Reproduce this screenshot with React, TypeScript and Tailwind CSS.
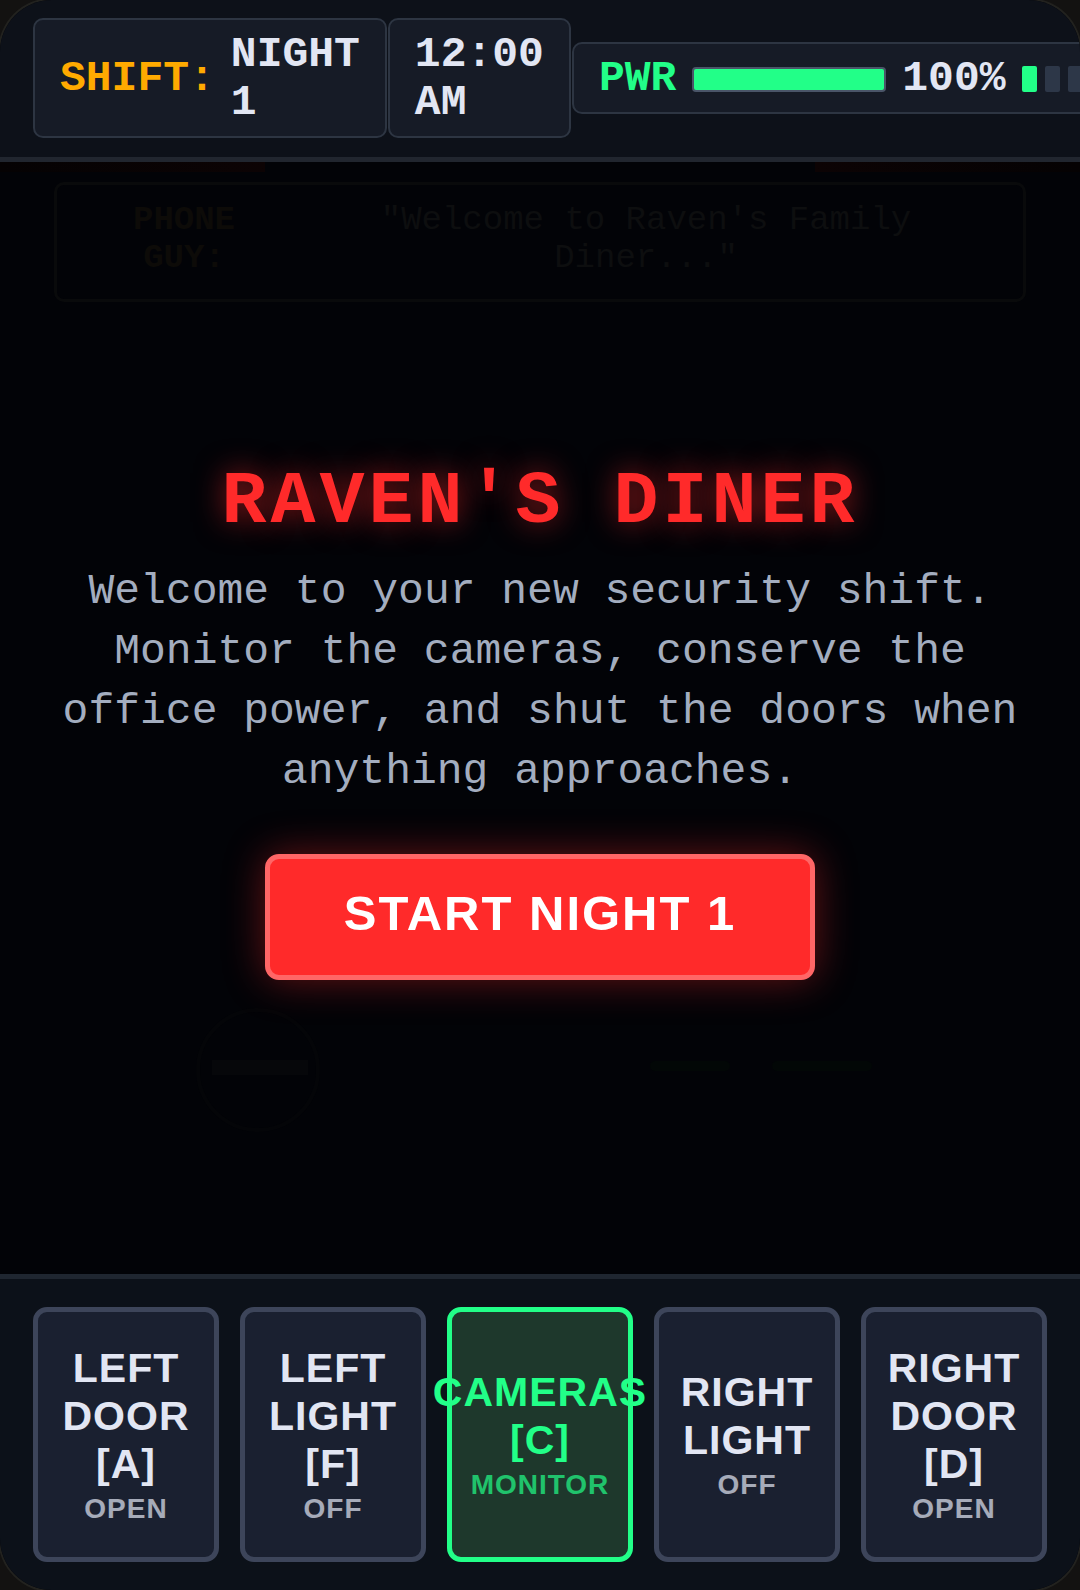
import type { ReactNode } from "react";

type Control = {
  label: string;
  status: string;
  active?: boolean;
};

const controls: Control[] = [
  { label: "LEFT DOOR [A]", status: "OPEN" },
  { label: "LEFT LIGHT [F]", status: "OFF" },
  { label: "CAMERAS [C]", status: "MONITOR", active: true },
  { label: "RIGHT LIGHT", status: "OFF" },
  { label: "RIGHT DOOR [D]", status: "OPEN" },
];

const usage = [true, false, false, false, false];

function Panel({ children, meter = false }: { children: ReactNode; meter?: boolean }) {
  return (
    <div
      className={
        "flex items-center gap-4 rounded-[10px] border-2 border-[#2d3542] bg-[#161b26] px-[25px] pt-[11px] pb-[9px] " +
        (meter ? "shrink-0" : "shrink")
      }
    >
      {children}
    </div>
  );
}

function StatusBar() {
  return (
    <header className="flex items-center gap-px border-b-[5px] border-[#21262f] bg-[#0d1119] px-[33px] pt-[18px] pb-[19px] font-['Liberation_Mono',monospace] text-[43px] leading-[48px] font-bold text-[#e2e6f3]">
      <Panel>
        <span className="text-[#ffaa00]">SHIFT:</span>
        <span>NIGHT 1</span>
      </Panel>
      <Panel>
        <span>12:00 AM</span>
      </Panel>
      <Panel meter>
        <span className="text-[#22ff88]">PWR</span>
        <div className="h-[25px] w-[194px] rounded-[4px] border-2 border-[#4a5568] bg-[#22ff88]" />
        <span>100%</span>
        <div className="flex gap-2">
          {usage.map((on, i) => (
            <span
              key={i}
              className={"h-[26px] w-[15px] rounded-[2px] " + (on ? "bg-[#22ff88]" : "bg-[#2d3748]")}
            />
          ))}
        </div>
      </Panel>
    </header>
  );
}

function Office() {
  return (
    <div className="absolute inset-0 flex flex-col">
      <div className="flex h-[10px] justify-between">
        <span className="w-[265px] bg-linear-to-r from-[#050203] to-[#0c0304]" />
        <span className="w-[265px] bg-linear-to-l from-[#050203] to-[#0c0304]" />
      </div>
      <div className="mx-[54px] mt-[10px] grid grid-cols-[212px_1fr] rounded-[10px] border-[3px] border-[#090a0b] px-[21px] pt-4 pb-[22px] text-center font-['Liberation_Mono',monospace] text-[34px] leading-[38px]">
        <strong className="mx-auto w-min text-[#0d0b08]">PHONE GUY:</strong>
        <span className="text-[#0d0e0f]">"Welcome to Raven's Family Diner..."</span>
      </div>
      <svg className="mt-auto h-[270px] w-full" viewBox="0 0 1080 270" aria-hidden="true">
        <circle cx="258" cy="66" r="60" fill="none" stroke="#040508" strokeWidth="4" />
        <rect x="212" y="56" width="96" height="15" fill="#06070a" />
        <rect x="650" y="57" width="80" height="10" rx="5" fill="#020706" />
        <rect x="772" y="57" width="100" height="10" rx="5" fill="#020706" />
      </svg>
    </div>
  );
}

function StartScreen() {
  return (
    <main className="relative flex flex-1 flex-col items-center justify-center bg-[#020307] px-[54px] pt-1">
      <Office />
      <h1 className="relative font-['Liberation_Mono',monospace] text-[75px] leading-[86px] font-bold tracking-[4px] text-[#ff2a2a] [text-shadow:0_0_30px_rgba(255,42,42,0.6)]">
        RAVEN'S DINER
      </h1>
      <p className="relative mt-4 text-center font-['Liberation_Mono',monospace] text-[43px] leading-[60px] text-[#a3adbf]">
        Welcome to your new security shift. Monitor the cameras, conserve the office power, and shut the doors when
        anything approaches.
      </p>
      <button
        type="button"
        className="relative mt-[52px] rounded-[14px] border-[5px] border-[#ff6666] bg-[#ff2a2a] px-[74px] pt-[26px] pb-[34px] font-['Liberation_Sans',sans-serif] text-[49px] leading-[56px] font-bold tracking-[2px] text-white shadow-[0_0_40px_rgba(255,42,42,0.4)]"
      >
        START NIGHT 1
      </button>
    </main>
  );
}

function ControlButton({ label, status, active = false }: Control) {
  return (
    <button
      type="button"
      className={
        "flex h-[255px] min-w-0 flex-col items-center justify-center gap-[5px] rounded-[14px] border-[5px] px-[15px] font-['Liberation_Sans',sans-serif] font-bold tracking-[1px] " +
        (active
          ? "border-[#22ff88] bg-[#1e382c] text-[#22ff88]"
          : "border-[#3d455a] bg-[#1a2030] text-[#e2e6f3]")
      }
    >
      <span className="w-min text-[41px] leading-[48px]">{label}</span>
      <span className="text-[28px] leading-8 opacity-70">{status}</span>
    </button>
  );
}

export default function App() {
  return (
    <div className="min-h-screen bg-[#131211]">
      <div className="flex min-h-screen flex-col overflow-hidden rounded-[52px] bg-[#020307] shadow-[0_0_0_2px_#22221f]">
        <StatusBar />
        <StartScreen />
        <footer className="grid grid-cols-5 gap-[21px] border-t-[5px] border-[#1f2630] bg-[#0c1119] px-[33px] py-7">
          {controls.map((control) => (
            <ControlButton key={control.label} {...control} />
          ))}
        </footer>
      </div>
    </div>
  );
}
